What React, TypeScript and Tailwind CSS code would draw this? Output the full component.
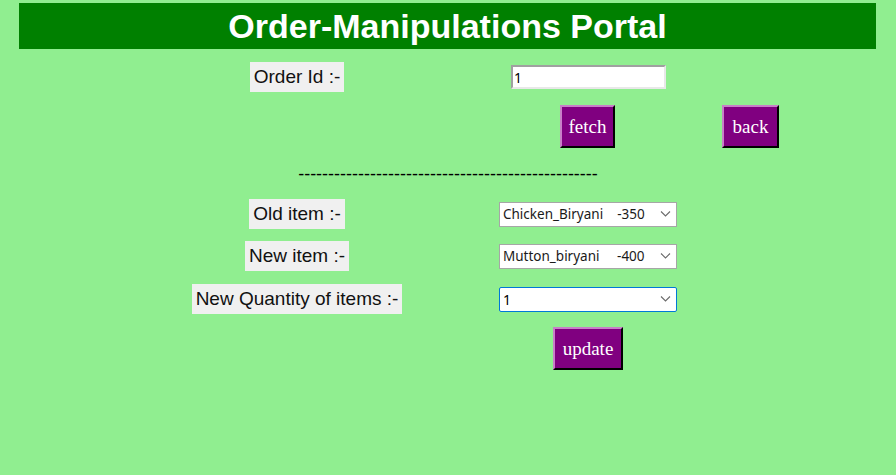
const OLD_ITEMS = [
  'Chicken_Biryani\u00a0\u00a0\u00a0\u00a0-350',
  'Mutton_biryani\u00a0\u00a0\u00a0\u00a0\u00a0-400',
]

function Chevron() {
  return (
    <svg width="11" height="7" viewBox="0 0 11 7" className="pointer-events-none absolute right-[6px] top-1/2 -translate-y-1/2">
      <path d="M1 1 L5.5 5.5 L10 1" fill="none" stroke="#6b6b6b" strokeWidth="1.1" />
    </svg>
  )
}

function Label({ text }: { text: string }) {
  return (
    <div className="flex w-[212px] justify-center">
      <span className="flex h-[30px] items-center bg-[#f0f0f0] px-[4px] text-[19px] text-[#111] font-['Liberation_Sans',Arial,sans-serif]">
        {text}
      </span>
    </div>
  )
}

function PurpleButton({ text, width }: { text: string; width: string }) {
  return (
    <button
      className={`${width} h-[43px] bg-[#800080] border-2 border-t-[#c87fc8] border-l-[#c87fc8] border-r-black border-b-black text-white text-[19px] font-['Liberation_Serif','Times_New_Roman',serif] leading-none`}
    >
      {text}
    </button>
  )
}

function SelectBox({ value }: { value: string }) {
  return (
    <div className="relative w-[178px] h-[25px]">
      <select
        defaultValue={value}
        className="appearance-none w-full h-full bg-white border border-[#a6a6a6] pl-[3px] text-[13.5px] text-[#1a1a1a] font-['Noto_Sans','Open_Sans',sans-serif] outline-none"
      >
        {OLD_ITEMS.map((it) => (
          <option key={it} value={it}>
            {it}
          </option>
        ))}
      </select>
      <Chevron />
    </div>
  )
}

export default function App() {
  return (
    <div className="h-[475px] w-[896px] bg-[#90ee90] pt-[3px] font-['Liberation_Sans',Arial,sans-serif]">
      {/* header */}
      <div className="ml-[19px] mr-[20px] flex h-[46px] items-center justify-center bg-[#008000]">
        <h1 className="text-[34px] font-bold text-white leading-none">Order-Manipulations Portal</h1>
      </div>

      {/* order id */}
      <div className="mt-[13px] flex items-center pl-[191px]">
        <Label text="Order Id :-" />
        <input
          defaultValue="1"
          className="ml-[108px] h-[24px] w-[155px] bg-white border-2 border-t-[#a0a0a0] border-l-[#a0a0a0] border-r-[#e8e8e8] border-b-[#e8e8e8] px-[1px] text-[14px] text-black font-['Noto_Sans',sans-serif] outline-none"
        />
      </div>

      {/* fetch / back */}
      <div className="mt-[13px] flex pl-[560px] gap-[107px]">
        <PurpleButton text="fetch" width="w-[55px]" />
        <PurpleButton text="back" width="w-[57px]" />
      </div>

      {/* divider */}
      <p className="mt-[16px] text-center text-[18px] leading-[21px] text-black">
        {'-'.repeat(50)}
      </p>

      {/* items */}
      <div className="mt-[14px] flex flex-col gap-[12px] pl-[191px]">
        <div className="flex items-center">
          <Label text="Old item :-" />
          <div className="ml-[96px]">
            <SelectBox value={OLD_ITEMS[0]} />
          </div>
        </div>
        <div className="flex items-center">
          <Label text="New item :-" />
          <div className="ml-[96px]">
            <SelectBox value={OLD_ITEMS[1]} />
          </div>
        </div>
        <div className="mt-[1px] flex items-center">
          <Label text="New Quantity of items :-" />
          <div className="ml-[96px] relative w-[178px] h-[25px]">
            <input
              defaultValue="1"
              className="w-full h-full bg-white border border-[#0078d7] rounded-[2px] pl-[3px] text-[14px] text-black font-['Noto_Sans',sans-serif] outline-none"
            />
            <Chevron />
          </div>
        </div>
      </div>

      {/* update */}
      <div className="mt-[13px] pl-[553px]">
        <PurpleButton text="update" width="w-[70px]" />
      </div>
    </div>
  )
}
